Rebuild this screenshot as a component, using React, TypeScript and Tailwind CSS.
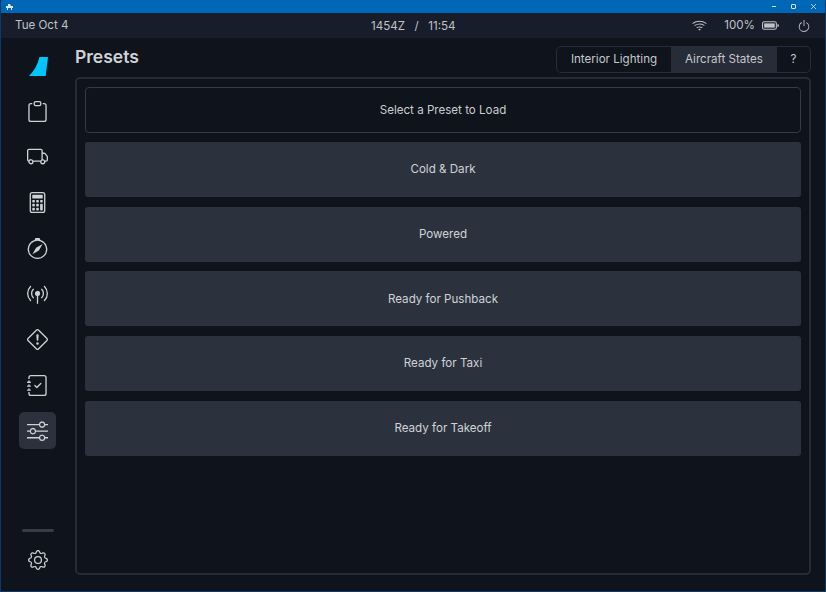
import {
  BsBatteryFull,
  BsBroadcastPin,
  BsCalculator,
  BsClipboard,
  BsCompass,
  BsExclamationDiamond,
  BsGear,
  BsJournalCheck,
  BsPower,
  BsSliders,
  BsTruck,
  BsWifi,
} from 'react-icons/bs';

const NAV_ICONS = [BsClipboard, BsTruck, BsCalculator, BsCompass, BsBroadcastPin, BsExclamationDiamond, BsJournalCheck];

const PRESETS = ['Cold & Dark', 'Powered', 'Ready for Pushback', 'Ready for Taxi', 'Ready for Takeoff'];

function TitleBar() {
  return (
    <div className="flex h-[13px] shrink-0 items-center justify-between bg-[#0067b7] pl-[5px] pr-[9px]">
      <svg width="7" height="6" viewBox="0 0 7 6">
        <path d="M2 0h2l1 2h2v2H6v2H5V4H2v2H1V4H0V2h2z" fill="#dbe7f2" />
      </svg>
      <div className="flex items-center gap-[15px]">
        <div className="h-px w-[4px] bg-[#d5e5f3]" />
        <div className="h-[5px] w-[5px] rounded-[1px] border border-[#d5e5f3]" />
        <svg width="5" height="5" viewBox="0 0 5 5">
          <path d="M0 0l5 5M5 0L0 5" stroke="#d5e5f3" strokeWidth="0.8" />
        </svg>
      </div>
    </div>
  );
}

function StatusBar() {
  return (
    <div className="relative flex h-[25px] shrink-0 items-center justify-between bg-[#171d2a] px-[14px] pt-px text-[11.6px] text-[#c0c3c8]">
      <span>Tue Oct 4</span>
      <div className="absolute left-[370px] top-px flex h-full items-center">
        <span>1454Z</span>
        <span className="mx-[9.500px]">/</span>
        <span>11:54</span>
      </div>
      <div className="flex items-center">
        <BsWifi className="mr-[17px] text-[15px]" />
        <span className="mr-[7px]">100%</span>
        <BsBatteryFull className="mr-[18px] text-[17px]" />
        <BsPower className="text-[14px]" />
      </div>
    </div>
  );
}

function Sidebar() {
  return (
    <div className="flex w-[73px] shrink-0 flex-col items-center">
      <svg width="20" height="19" viewBox="0 0 20 19" className="mt-[19px]">
        <path d="M11.500 0H20l-2.300 19H1C6 14 9.500 8 11.500 0z" fill="#00c6ff" />
      </svg>
      <div className="mt-[16px] flex flex-col items-center gap-[7.700px]">
        {NAV_ICONS.map((Icon, idx) => (
          <div key={idx} className="flex h-[38px] w-[38px] items-center justify-center">
            <Icon className="text-[21px] text-[#cfd1d5]" />
          </div>
        ))}
        <div className="flex h-[37px] w-[37px] items-center justify-center rounded-[5px] bg-[#2b323e]">
          <BsSliders className="text-[21px] text-[#cfd1d5]" />
        </div>
      </div>
      <div className="mt-auto h-[3px] w-[32px] rounded-full bg-[#363c48]" />
      <BsGear className="mb-[21px] mt-[18px] text-[20px] text-[#cfd1d5]" />
    </div>
  );
}

function Tabs() {
  return (
    <div className="flex h-[27px] overflow-hidden rounded-[5px] border border-[#262c38] text-[11.6px] text-[#c6c8cc]">
      <div className="flex w-[114px] items-center justify-center pt-px">Interior Lighting</div>
      <div className="flex w-[106px] items-center justify-center bg-[#262c38] pt-px">Aircraft States</div>
      <div className="flex w-[33px] items-center justify-center pt-px">?</div>
    </div>
  );
}

export default function App() {
  return (
    <div className="flex h-[592px] w-[826px] flex-col overflow-hidden border-x border-b border-x-[#0b3a66] border-b-[#0b3a66] bg-[#0e131c] font-['Inter',sans-serif]">
      <TitleBar />
      <StatusBar />
      <div className="flex min-h-0 flex-1">
        <Sidebar />
        <div className="flex min-w-0 flex-1 flex-col pl-[1px] pr-[14px]">
          <div className="mt-[8px] flex h-[27px] items-center justify-between">
            <h1 className="-translate-y-[2px] text-[17.500px] font-semibold text-[#d0d2d6]">Presets</h1>
            <Tabs />
          </div>
          <div className="mb-[16px] mt-[4px] flex flex-1 flex-col rounded-[5px] border-2 border-[#262c37] p-[8px]">
            <div className="flex h-[46px] shrink-0 items-center justify-center rounded-[4px] border border-[#343a46] pt-px text-[11.6px] text-[#cbcdd1]">
              Select a Preset to Load
            </div>
            <div className="mt-[9px] flex flex-col gap-[9.700px]">
              {PRESETS.map((name) => (
                <div
                  key={name}
                  className="flex h-[55px] items-center justify-center rounded-[3px] bg-[#2b323e] pt-px text-[11.6px] text-[#d0d2d6]"
                >
                  {name}
                </div>
              ))}
            </div>
          </div>
        </div>
      </div>
    </div>
  );
}
